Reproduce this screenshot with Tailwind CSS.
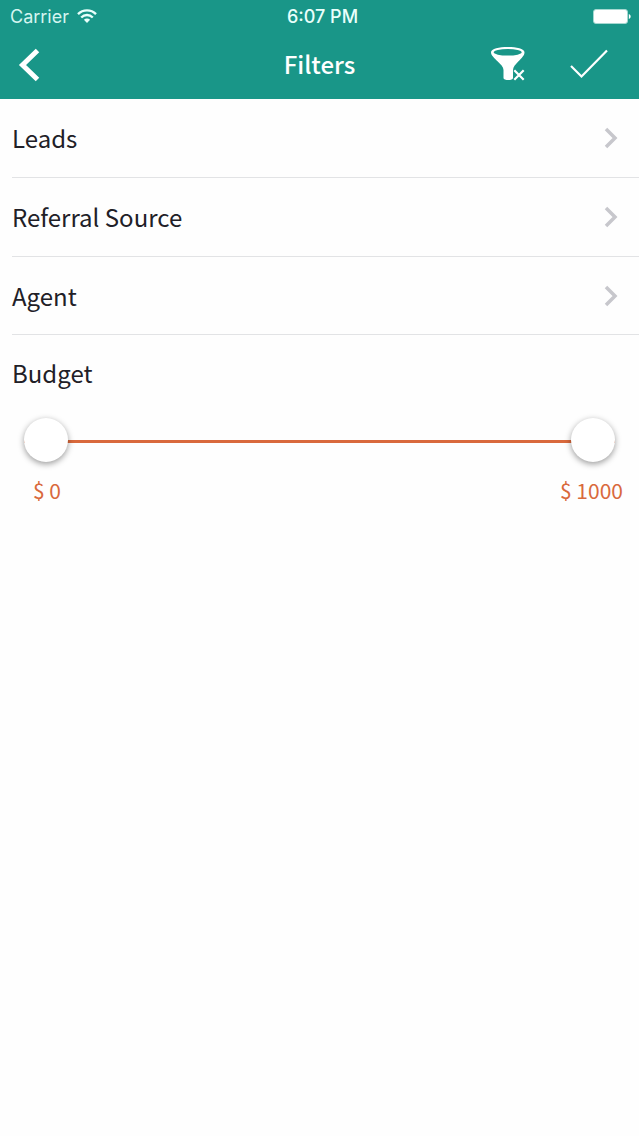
<!DOCTYPE html>
<html lang="en">
<head>
<meta charset="utf-8">
<meta name="viewport" content="width=device-width, initial-scale=1">
<title>Filters</title>
<script src="https://cdn.jsdelivr.net/npm/@tailwindcss/browser@4"></script>
</head>
<body class="min-h-screen bg-[#fefefe] font-['Noto_Sans_CJK_SC',sans-serif] text-[#212027]">
<header class="bg-[#199688] text-white">
  <div class="grid h-[33px] grid-cols-3 items-center pr-2 pl-2.5 font-[Inter,sans-serif] text-lg leading-8">
    <div class="flex items-center gap-2 text-[#d5f5f0]">
      <span>Carrier</span>
      <svg class="h-4 w-5" viewBox="0 0 20 16" fill="none" stroke="#e9fffb" stroke-width="2.4" aria-label="Wi-Fi">
        <path d="M1 5.1C6 .1 14 .1 19 5.1M4.200 8.500C7.600 5.200 12.400 5.200 15.800 8.500"/>
        <path d="M6.900 10.800c1.800-1.700 4.400-1.700 6.200 0L10 13.900z" fill="#e9fffb" stroke="none"/>
      </svg>
    </div>
    <time class="pl-1 text-center font-medium text-[#e9fffb]">6:07 PM</time>
    <svg class="h-4 w-[38px] justify-self-end" viewBox="0 0 38 16" aria-label="Battery full">
      <rect x=".5" y=".5" width="34" height="14" rx="2.500" fill="#fff" stroke="#a5d8d1"/>
      <path d="M35.800 5c2.500.8 2.500 4.200 0 5z" fill="#fff"/>
    </svg>
  </div>
  <div class="grid h-[66px] grid-cols-3 items-center pr-[30px] pb-1 pl-4">
    <button type="button" aria-label="Back" class="w-8">
      <svg class="h-9 w-6" viewBox="0 0 24 36" fill="none" stroke="#fff" stroke-width="5"><path d="M21.500 4.500L6.500 19l15 14.500"/></svg>
    </button>
    <h1 class="pl-3.5 text-center text-2xl font-medium">Filters</h1>
    <div class="flex items-center justify-end gap-[43px]">
      <button type="button" aria-label="Clear filters">
        <svg class="h-9 w-9" viewBox="0 0 36 36">
          <path d="M1 6.200C1-.8 34.500-.8 34.500 6.200c0 3.300-3 6-6 9-2.800 2.800-5.500 5.800-5.500 8.800v8c0 2.700-9.500 2.700-9.500 0v-8c0-3-3-6-6-8.800C4.500 12.200 1 9.500 1 6.200z" fill="#fff"/>
          <ellipse cx="17.700" cy="6.300" rx="14" ry="3.300" fill="#199688"/>
          <path d="M24.300 24.300l9.400 9.400m0-9.400l-9.400 9.400" fill="none" stroke="#199688" stroke-width="4"/>
          <path d="M24.300 24.300l9.400 9.400m0-9.400l-9.400 9.400" fill="none" stroke="#fff" stroke-width="2.200"/>
        </svg>
      </button>
      <button type="button" aria-label="Apply filters">
        <svg class="h-9 w-10" viewBox="0 0 40 36" fill="none" stroke="#fff" stroke-width="2.200"><path d="M2 20l10.500 10.500L38 4.500"/></svg>
      </button>
    </div>
  </div>
</header>
<main>
  <nav aria-label="Filter categories" class="pl-3 text-2xl">
    <a href="#leads" class="flex h-[79px] items-center justify-between border-b border-[#e2e3e5] pr-5">
      <span>Leads</span>
      <svg class="h-6 w-4" viewBox="0 0 16 24" fill="none" stroke="#c7c7cc" stroke-width="3.500"><path d="M3 3l9 9-9 9"/></svg>
    </a>
    <a href="#referral-source" class="flex h-[79px] items-center justify-between border-b border-[#e2e3e5] pr-5">
      <span>Referral Source</span>
      <svg class="h-6 w-4" viewBox="0 0 16 24" fill="none" stroke="#c7c7cc" stroke-width="3.500"><path d="M3 3l9 9-9 9"/></svg>
    </a>
    <a href="#agent" class="flex h-[78px] items-center justify-between border-b border-[#e2e3e5] pr-5">
      <span>Agent</span>
      <svg class="h-6 w-4" viewBox="0 0 16 24" fill="none" stroke="#c7c7cc" stroke-width="3.500"><path d="M3 3l9 9-9 9"/></svg>
    </a>
  </nav>
  <fieldset class="pt-[18px]">
    <legend class="float-left w-full pl-3 text-2xl leading-10">Budget</legend>
    <div class="clear-both grid items-center px-6 pt-[25px]">
      <div class="col-start-1 row-start-1 mt-0.5 h-[3px] bg-[#d9693c]"></div>
      <input id="min" type="range" min="0" max="1000" value="0" aria-label="Minimum budget" class="pointer-events-none col-start-1 row-start-1 h-11 w-full appearance-none bg-transparent [&::-webkit-slider-thumb]:pointer-events-auto [&::-webkit-slider-thumb]:size-11 [&::-webkit-slider-thumb]:appearance-none [&::-webkit-slider-thumb]:rounded-full [&::-webkit-slider-thumb]:bg-white [&::-webkit-slider-thumb]:shadow-[0_2px_6px_rgba(0,0,0,0.4)]">
      <input id="max" type="range" min="0" max="1000" value="1000" aria-label="Maximum budget" class="pointer-events-none col-start-1 row-start-1 h-11 w-full appearance-none bg-transparent [&::-webkit-slider-thumb]:pointer-events-auto [&::-webkit-slider-thumb]:size-11 [&::-webkit-slider-thumb]:appearance-none [&::-webkit-slider-thumb]:rounded-full [&::-webkit-slider-thumb]:bg-white [&::-webkit-slider-thumb]:shadow-[0_2px_6px_rgba(0,0,0,0.4)]">
    </div>
    <div class="flex justify-between pt-3 pr-4 pl-[33px] text-[21px] leading-8 text-[#d9693c]">
      <output for="min">$ 0</output>
      <output for="max">$ 1000</output>
    </div>
  </fieldset>
</main>
</body>
</html>
